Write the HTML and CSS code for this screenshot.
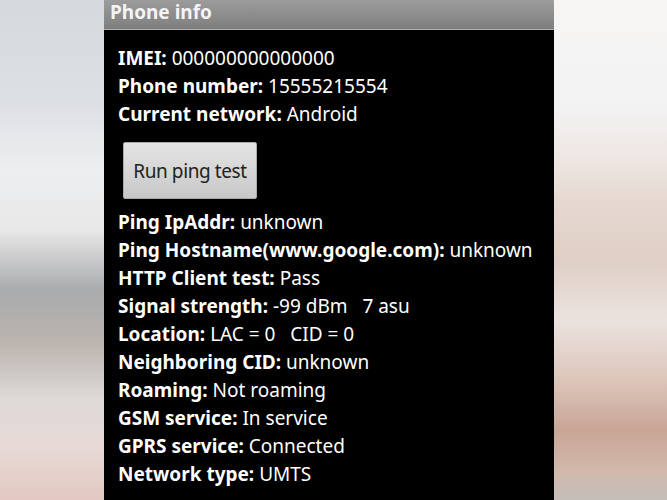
FILE: index.html
```html
<!DOCTYPE html>
<html lang="en">
<head>
    <meta charset="UTF-8">
    <meta name="viewport" content="width=device-width, initial-scale=1.0">
    <title>Phone info</title>
    <link rel="stylesheet" href="styles.css">
</head>
<body>
    <div class="screen">
        <!-- blurred wallpaper on the left -->
        <div class="backdrop backdrop-left"></div>

        <div class="dialog">
            <div class="title-bar">Phone info</div>
            <div class="content">
                <p class="row"><b>IMEI:</b> 000000000000000</p>
                <p class="row"><b>Phone number:</b> 15555215554</p>
                <p class="row"><b>Current network:</b> Android</p>

                <button class="ping-button" type="button">Run ping test</button>

                <p class="row"><b>Ping IpAddr:</b> unknown</p>
                <p class="row"><b>Ping Hostname(www.google.com):</b> unknown</p>
                <p class="row"><b>HTTP Client test:</b> Pass</p>
                <p class="row"><b>Signal strength:</b> -99 dBm&nbsp;&nbsp; 7 asu</p>
                <p class="row"><b>Location:</b> LAC = 0&nbsp;&nbsp; CID = 0</p>
                <p class="row"><b>Neighboring CID:</b> unknown</p>
                <p class="row"><b>Roaming:</b> Not roaming</p>
                <p class="row"><b>GSM service:</b> In service</p>
                <p class="row"><b>GPRS service:</b> Connected</p>
                <p class="row"><b>Network type:</b> UMTS</p>
            </div>
        </div>

        <!-- blurred wallpaper on the right -->
        <div class="backdrop backdrop-right"></div>
    </div>
</body>
</html>
```

FILE: styles.css
```css
body {
    margin: 0;
    padding: 0;
    font-family: "Noto Sans", "Open Sans", sans-serif;
    background-color: #e6e3e2;
}

.screen {
    display: grid;
    grid-template-columns: 104px 450px 1fr;
    height: 500px;
    overflow: hidden;
}

.backdrop-left {
    background: linear-gradient(to bottom,
        #d5d8dc 0px,
        #dde0e3 100px,
        #eceef0 170px,
        #e9e8e8 230px,
        #a9abae 290px,
        #bab3ae 340px,
        #dfdad8 400px,
        #e7d8d5 450px,
        #e3c9c1 500px);
}

.backdrop-right {
    background: linear-gradient(to bottom,
        #f7f6f5 0px,
        #f3f2f2 110px,
        #eee6e2 160px,
        #e6d9d1 200px,
        #dfcfc5 260px,
        #ebe2df 320px,
        #dcc6ba 380px,
        #c9a696 430px,
        #d1b8aa 470px,
        #c4bcb9 500px);
}

.dialog {
    display: flex;
    flex-direction: column;
    background: #000;
}

.title-bar {
    height: 29px;
    padding-left: 6px;
    font-size: 19px;
    font-weight: bold;
    line-height: 24px;
    color: #f4f4f4;
    background: linear-gradient(to bottom, #9c9c9c, #7e7e7e);
    border-bottom: 1px solid #b0b0b0;
}

.content {
    padding: 14px 14px 0;
    color: #fff;
}

.row {
    margin: 0;
    font-size: 19px;
    line-height: 28px;
    white-space: nowrap;
}

.ping-button {
    display: block;
    width: 134px;
    height: 57px;
    margin: 14px 0 9px 5px;
    padding: 0;
    font-family: inherit;
    font-size: 19px;
    letter-spacing: -0.4px;
    color: #222;
    background: linear-gradient(to bottom, #e4e4e4, #c8c8c8);
    border: 1px solid #aaa;
    border-radius: 2px;
}
```
